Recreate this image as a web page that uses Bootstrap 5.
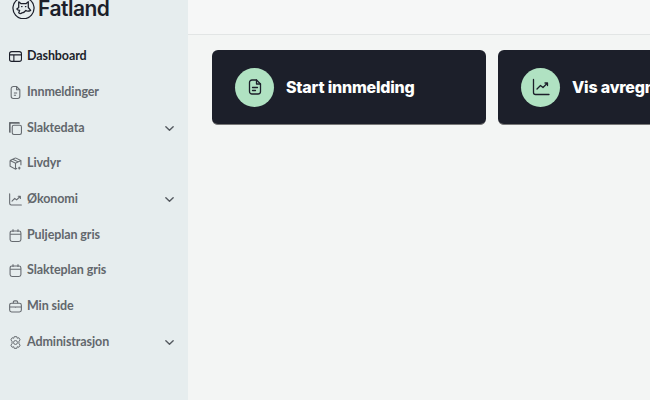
<!DOCTYPE html>
<html lang="no">
<head>
  <meta charset="UTF-8">
  <title>Fatland</title>
  <link href="https://cdn.jsdelivr.net/npm/bootstrap@5.3.2/dist/css/bootstrap.min.css" rel="stylesheet">
  <style>
    html, body {
      height: 100%;
      overflow: hidden;
    }

    body {
      background-color: #f3f5f4;
      font-family: "Lato", sans-serif;
    }

    .side-menu {
      width: 188px;
      flex: none;
      height: 400px;
      background-color: #e6edee;
    }

    .logo-row {
      height: 19px;
      margin-left: 12px;
      margin-bottom: 19.800px;
      overflow: hidden;
      align-items: flex-end;
    }

    .logo-text {
      font-family: "Inter", sans-serif;
      font-size: 21px;
      font-weight: 600;
      line-height: 24px;
      letter-spacing: -0.5px;
      color: #1c1f2a;
      margin-left: 3px;
      margin-bottom: -2px;
    }

    .menu-item {
      height: 35.7px;
      padding-left: 9px;
      padding-right: 13px;
      font-size: 12.500px;
      font-weight: 700;
      letter-spacing: -0.1px;
      color: #62676c;
      text-decoration: none;
    }

    .menu-item.is-active {
      color: #1c1f2a;
    }

    .menu-item svg.menu-icon {
      width: 13px;
      height: 13px;
      margin-left: -0.500px;
      margin-right: 5.500px;
      flex: none;
    }

    .menu-arrow {
      width: 11px;
      height: 11px;
      margin-left: auto;
    }

    .top-strip {
      height: 35px;
      background-color: #f6f7f7;
      border-bottom: 1px solid #e2e5e5;
    }

    .action-row {
      padding: 15px 0 0 24px;
      gap: 12px;
    }

    .action-box {
      width: 274px;
      height: 75px;
      flex: none;
      background-color: #1c1f2a;
      border-radius: 6px;
      padding-left: 23px;
      color: #fff;
      border-bottom: 1px solid #777;
    }

    .action-circle {
      width: 39px;
      height: 39px;
      flex: none;
      border-radius: 50%;
      background-color: #b0e2c2;
      margin-right: 12px;
    }

    .action-title {
      font-family: "Inter", sans-serif;
      font-size: 16px;
      font-weight: 800;
      white-space: nowrap;
      letter-spacing: -0.2px;
    }
  </style>
</head>
<body>
  <div class="d-flex">
    <!-- Sidemeny -->
    <nav class="side-menu d-flex flex-column">
      <div class="logo-row d-flex">
        <svg width="23" height="23" viewBox="0 0 24 24" fill="none" stroke="#1c1f2a" stroke-width="1.300" stroke-linecap="round" stroke-linejoin="round" class="flex-none">
          <path d="M6 3.500a11 11 0 1 0 12 0"/>
          <path d="M7 12V6l2.500 2h5L17 6v6l2.500 3c-2 1-4 1-5 0-1 1.500-2 2.500-4 2.500-1 1-2.500 1-3.500 0l1-2.500c-1.500 0-2.500-.5-3-1.500z"/>
          <path d="M10 11h.5M14 11h.5"/>
        </svg>
        <span class="logo-text">Fatland</span>
      </div>

      <a class="menu-item is-active d-flex align-items-center" href="#">
        <svg class="menu-icon" viewBox="0 0 12 12" fill="none" stroke="#1c1f2a" stroke-width="1"><rect x="0.5" y="1.500" width="11" height="9" rx="2"/><path d="M0.500 4.500h11M4.500 4.500v6"/></svg>
        Dashboard
      </a>
      <a class="menu-item d-flex align-items-center" href="#">
        <svg class="menu-icon" viewBox="0 0 12 12" fill="none" stroke="#666b70" stroke-width="1"><path d="M2 2.500a2 2 0 0 1 2-2h3l3 3v6a2 2 0 0 1-2 2H4a2 2 0 0 1-2-2z"/><path d="M7 .5v3h3M4.500 6.500h3M4.500 8.500h2"/></svg>
        Innmeldinger
      </a>
      <a class="menu-item d-flex align-items-center" href="#">
        <svg class="menu-icon" viewBox="0 0 12 12" fill="none" stroke="#666b70" stroke-width="1"><rect x="3" y="3" width="8.500" height="8.500" rx="1.500"/><path d="M9 1.500a1 1 0 0 0-1-1H2a1.500 1.500 0 0 0-1.500 1.500V8a1 1 0 0 0 1 1" stroke-width="2"/></svg>
        Slaktedata
        <svg class="menu-arrow" viewBox="0 0 12 12" fill="none" stroke="#555a60" stroke-width="1.500" stroke-linecap="round" stroke-linejoin="round"><path d="M2 4l4 4 4-4"/></svg>
      </a>
      <a class="menu-item d-flex align-items-center" href="#">
        <svg class="menu-icon" viewBox="0 0 12 12" fill="none" stroke="#666b70" stroke-width="1"><path d="M6 .8l5 2.400v4.500M1 3.200L6 .8M1 3.200v5.300l5 2.700 1.500-.8M1 3.200l5 2.500 5-2.500M6 5.700v5.500M3.500 2l5 2.500"/><path d="M9.500 9v2.500M8.300 10.200h2.400"/></svg>
        Livdyr
      </a>
      <a class="menu-item d-flex align-items-center" href="#">
        <svg class="menu-icon" viewBox="0 0 12 12" fill="none" stroke="#666b70" stroke-width="1" stroke-linecap="round" stroke-linejoin="round"><path d="M.6 .8v8.700a1.500 1.500 0 0 0 1.500 1.500h9.300"/><path d="M2.800 7.500l2.500-2.500 1.700 1.300 3.500-3.300M8.500 3h2v2"/></svg>
        Økonomi
        <svg class="menu-arrow" viewBox="0 0 12 12" fill="none" stroke="#555a60" stroke-width="1.500" stroke-linecap="round" stroke-linejoin="round"><path d="M2 4l4 4 4-4"/></svg>
      </a>
      <a class="menu-item d-flex align-items-center" href="#">
        <svg class="menu-icon" viewBox="0 0 12 12" fill="none" stroke="#666b70" stroke-width="1"><rect x="1" y="1.800" width="10" height="9.700" rx="1.800"/><path d="M1 4.800h10M3.700 .3v2.500M8.300 .3v2.500"/></svg>
        Puljeplan gris
      </a>
      <a class="menu-item d-flex align-items-center" href="#">
        <svg class="menu-icon" viewBox="0 0 12 12" fill="none" stroke="#666b70" stroke-width="1"><rect x="1" y="1.800" width="10" height="9.700" rx="1.800"/><path d="M1 4.800h10M3.700 .3v2.500M8.300 .3v2.500"/></svg>
        Slakteplan gris
      </a>
      <a class="menu-item d-flex align-items-center" href="#">
        <svg class="menu-icon" viewBox="0 0 12 12" fill="none" stroke="#666b70" stroke-width="1"><rect x=".6" y="3" width="10.800" height="8" rx="1.800"/><path d="M4 3V2a1.200 1.200 0 0 1 1.200-1.200h1.600A1.200 1.200 0 0 1 8 2v1M.6 6.500h10.800M6 6v1.200"/></svg>
        Min side
      </a>
      <a class="menu-item d-flex align-items-center" href="#">
        <svg class="menu-icon" viewBox="0 0 12 12" fill="none" stroke="#666b70" stroke-width=".9" stroke-linejoin="round"><path d="M4.800.6h2.400l.4 1.500 1.500-.5 1.200 2L9.200 4.800v2.400l1.100 1.200-1.200 2-1.500-.5-.4 1.500H4.800l-.4-1.500-1.500.5-1.200-2 1.100-1.200V4.800L1.700 3.600l1.200-2 1.500.5z"/><circle cx="6" cy="6" r="1.800"/></svg>
        Administrasjon
        <svg class="menu-arrow" viewBox="0 0 12 12" fill="none" stroke="#555a60" stroke-width="1.500" stroke-linecap="round" stroke-linejoin="round"><path d="M2 4l4 4 4-4"/></svg>
      </a>
    </nav>

    <!-- Innhold -->
    <main class="flex-grow-1 overflow-hidden">
      <div class="top-strip"></div>
      <div class="d-flex action-row">
        <a class="action-box d-flex align-items-center text-decoration-none">
          <span class="action-circle d-flex align-items-center justify-content-center">
            <svg width="16" height="16" viewBox="0 0 16 16" fill="none" stroke="#1c1f2a" stroke-width="1.300" stroke-linejoin="round" stroke-linecap="round"><path d="M2.500 3.500a2.500 2.500 0 0 1 2.500-2.500h4.500l4 4v7.500a2.500 2.500 0 0 1-2.500 2.500H5a2.500 2.500 0 0 1-2.500-2.500z"/><path d="M9.500 1v4h4M5.500 8.500h5M5.500 11.500h3"/></svg>
          </span>
          <span class="action-title">Start innmelding</span>
        </a>
        <a class="action-box d-flex align-items-center text-decoration-none">
          <span class="action-circle d-flex align-items-center justify-content-center">
            <svg width="18" height="18" viewBox="0 0 18 18" fill="none" stroke="#1c1f2a" stroke-width="1.300" stroke-linejoin="round" stroke-linecap="round"><path d="M1.500 1.500v13a2 2 0 0 0 2 2h13.500"/><path d="M5 11l3.500-3.500 2.500 2 4.500-4.500M13 5h2.500v2.500"/></svg>
          </span>
          <span class="action-title">Vis avregninger</span>
        </a>
      </div>
    </main>
  </div>
</body>
</html>
